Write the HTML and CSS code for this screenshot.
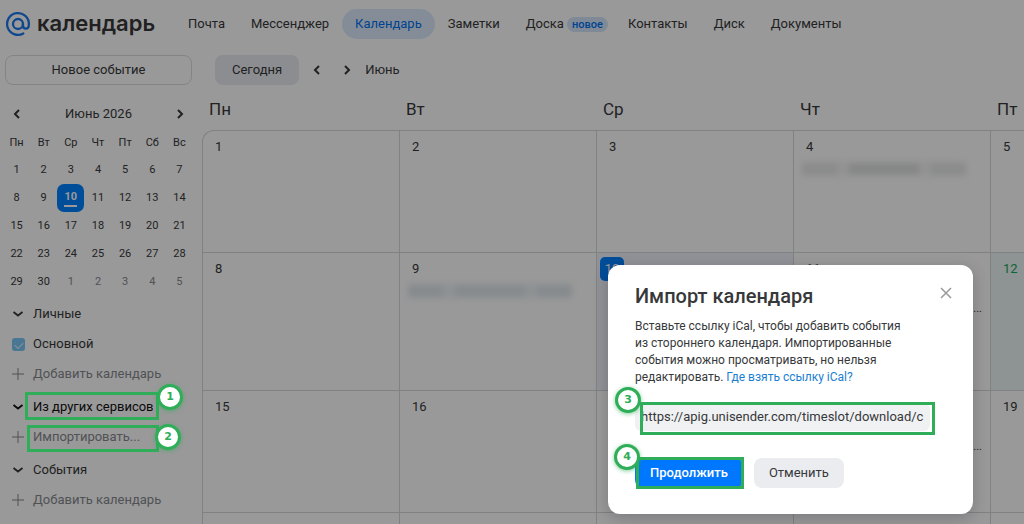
FILE: index.html
```html
<!DOCTYPE html>
<html lang="ru">
<head>
<meta charset="utf-8">
<title>Календарь</title>
<link rel="stylesheet" href="styles.css">
</head>
<body>
<div class="page">
  <header class="header">
    <a class="logo" href="#">
      <svg class="logo-mark" viewBox="0 0 26 26">
        <circle cx="13" cy="13" r="5"/>
        <path d="M18 13v1.600c0 1.900 1.200 3.100 2.800 3.100s3.100-1.500 3.100-4.700A10.900 10.900 0 1 0 18.300 22.500"/>
      </svg>
      <span>календарь</span>
    </a>
    <nav class="nav">
      <a href="#">Почта</a>
      <a href="#">Мессенджер</a>
      <a class="active" href="#">Календарь</a>
      <a href="#">Заметки</a>
      <a href="#">Доска <span class="tag">новое</span></a>
      <a href="#">Контакты</a>
      <a href="#">Диск</a>
      <a href="#">Документы</a>
    </nav>
  </header>

  <div class="body">
    <aside class="sidebar">
      <button class="new-event" type="button">Новое событие</button>
      <div class="mini-head">
        <button class="arrow" type="button" aria-label="Предыдущий месяц"><svg viewBox="0 0 12 12"><path d="M8 2 4 6l4 4"/></svg></button>
        <span>Июнь 2026</span>
        <button class="arrow" type="button" aria-label="Следующий месяц"><svg viewBox="0 0 12 12"><path d="m4 2 4 4-4 4"/></svg></button>
      </div>
      <table class="mini">
        <thead><tr><th>Пн</th><th>Вт</th><th>Ср</th><th>Чт</th><th>Пт</th><th>Сб</th><th>Вс</th></tr></thead>
        <tbody>
          <tr><td>1</td><td>2</td><td>3</td><td>4</td><td>5</td><td>6</td><td>7</td></tr>
          <tr><td>8</td><td>9</td><td><span class="mini-today">10</span></td><td>11</td><td>12</td><td>13</td><td>14</td></tr>
          <tr><td>15</td><td>16</td><td>17</td><td>18</td><td>19</td><td>20</td><td>21</td></tr>
          <tr><td>22</td><td>23</td><td>24</td><td>25</td><td>26</td><td>27</td><td>28</td></tr>
          <tr><td>29</td><td>30</td><td class="other">1</td><td class="other">2</td><td class="other">3</td><td class="other">4</td><td class="other">5</td></tr>
        </tbody>
      </table>
      <section class="group">
        <button class="row" type="button"><svg class="chev" viewBox="0 0 12 12"><path d="m1.500 4 4.500 3.500L10.500 4"/></svg>Личные</button>
        <label class="row"><input class="check" type="checkbox" checked>Основной</label>
        <button class="row muted" type="button"><svg class="plus" viewBox="0 0 12 12"><path d="M6 0v12M0 6h12"/></svg>Добавить календарь</button>
      </section>
      <section class="group">
        <button class="row strong" type="button"><svg class="chev" viewBox="0 0 12 12"><path d="m1.500 4 4.500 3.500L10.500 4"/></svg>Из других сервисов
          <span class="mark mark-1"><b>1</b></span></button>
        <button class="row muted" type="button"><svg class="plus" viewBox="0 0 12 12"><path d="M6 0v12M0 6h12"/></svg>Импортировать...
          <span class="mark mark-2"><b>2</b></span></button>
      </section>
      <section class="group">
        <button class="row" type="button"><svg class="chev" viewBox="0 0 12 12"><path d="m1.500 4 4.500 3.500L10.500 4"/></svg>События</button>
        <button class="row muted" type="button"><svg class="plus" viewBox="0 0 12 12"><path d="M6 0v12M0 6h12"/></svg>Добавить календарь</button>
      </section>
    </aside>

    <main class="main">
      <div class="toolbar">
        <button class="today-btn" type="button">Сегодня</button>
        <button class="arrow" type="button" aria-label="Назад"><svg viewBox="0 0 12 12"><path d="M8 2 4 6l4 4"/></svg></button>
        <button class="arrow" type="button" aria-label="Вперёд"><svg viewBox="0 0 12 12"><path d="m4 2 4 4-4 4"/></svg></button>
        <span>Июнь</span>
      </div>
      <div class="weekdays"><span>Пн</span><span>Вт</span><span>Ср</span><span>Чт</span><span>Пт</span></div>
      <div class="month">
        <div class="cell">1</div><div class="cell">2</div><div class="cell">3</div>
        <div class="cell">4<div class="hidden-event"><i></i><i></i><i></i></div></div>
        <div class="cell">5</div>
        <div class="cell">8</div>
        <div class="cell">9<div class="hidden-event blue"><i></i><i></i><i></i></div></div>
        <div class="cell current"><span class="current-day">10</span></div>
        <div class="cell">11<p class="more">...</p></div>
        <div class="cell holiday">12</div>
        <div class="cell">15</div><div class="cell">16</div><div class="cell">17</div>
        <div class="cell">18<p class="more">...</p></div>
        <div class="cell">19</div>
        <div class="cell"></div><div class="cell"></div><div class="cell"></div><div class="cell"></div><div class="cell"></div>
      </div>
    </main>
  </div>

  <div class="shade"></div>

  <form class="dialog" role="dialog" aria-labelledby="dialog-title">
    <div class="dialog-head">
      <h1 id="dialog-title">Импорт календаря</h1>
      <button class="close" type="button" aria-label="Закрыть"><svg viewBox="0 0 12 12"><path d="m1 1 10 10M11 1 1 11"/></svg></button>
    </div>
    <p class="dialog-text">Вставьте ссылку iCal, чтобы добавить события<br>из стороннего календаря. Импортированные<br>события можно просматривать, но нельзя<br>редактировать. <a href="#">Где взять ссылку iCal?</a></p>
    <div class="field">
      <input type="text" aria-label="Ссылка iCal" value="https://apig.unisender.com/timeslot/download/calendar">
      <span class="mark mark-3"><b>3</b></span>
    </div>
    <div class="actions">
      <button class="primary" type="button">Продолжить<span class="mark mark-4"><b>4</b></span></button>
      <button class="secondary" type="button">Отменить</button>
    </div>
  </form>
</div>
</body>
</html>
```
FILE: styles.css
```css
* { box-sizing: border-box; }
body {
  margin: 0;
  background: #fff;
  color: #37383a;
  font: 13px/16px Roboto, "Open Sans", sans-serif;
}
button, input { font: inherit; color: inherit; }
button { border: 0; padding: 0; background: none; }
a { color: inherit; text-decoration: none; }
svg { fill: none; stroke: currentColor; flex: none; }

.page {
  position: relative;
  height: 100vh;
  overflow: hidden;
}

.header {
  display: flex;
  align-items: center;
  height: 47px;
  padding-left: 5px;
}
.logo {
  display: flex;
  align-items: center;
  gap: 6px;
  width: 170px;
  font: 600 22px/28px Inter, sans-serif;
}
.logo-mark { width: 26px; height: 26px; stroke: #1a78ee; stroke-width: 2.3; stroke-linecap: round; }
.logo span { padding-bottom: 2px; }
.nav { display: flex; white-space: nowrap; }
.nav a { padding: 7px 13px; border-radius: 16px; }
.nav .active { background: #dcecfc; color: #0070f0; }
.tag {
  margin-right: -6px;
  padding: 1px 5px;
  border-radius: 8px;
  background: #d5e7fb;
  color: #0070f0;
  font-size: 11px;
  line-height: 14px;
  font-weight: 500;
}

.body { display: flex; padding-top: 8px; }
.sidebar { flex: none; width: 202px; padding: 0 10px 0 5px; }
.new-event {
  width: 100%;
  height: 30px;
  border: 1px solid #dcdde0;
  border-radius: 8px;
}
.mini-head {
  display: flex;
  align-items: center;
  justify-content: space-between;
  height: 20px;
  margin: 19px 6px 6px;
}
.arrow { display: flex; align-items: center; justify-content: center; }
.arrow svg { width: 12px; height: 12px; stroke-width: 2; }
.mini {
  width: 190px;
  margin-left: -2px;
  border-spacing: 0;
  table-layout: fixed;
  font-size: 11px;
  text-align: center;
}
.mini th { height: 26px; padding: 0; font-weight: 400; }
.mini td { height: 28px; padding: 0; }
.mini .other { color: #87898f; }
.mini-today {
  display: block;
  width: 27px;
  height: 28px;
  padding-top: 5px;
  border-radius: 7px;
  background: #0080ff;
  color: #fff;
  font-weight: 700;
}
.mini-today::after {
  content: "";
  display: block;
  width: 13px;
  height: 2px;
  margin: 0 auto;
  background: #fff;
}
.group { margin-bottom: 3px; }
.mini + .group { padding-top: 3px; }
.row {
  position: relative;
  display: flex;
  align-items: center;
  gap: 9px;
  width: 100%;
  height: 30px;
  padding-left: 7px;
  text-align: left;
  white-space: nowrap;
}
.row svg { width: 12px; height: 12px; }
.chev { stroke-width: 1.8; }
.muted { color: #87898f; }
.strong { color: #111; }
.check {
  appearance: none;
  display: grid;
  place-items: center;
  width: 13px;
  height: 13px;
  margin: 0 -1px 0 0;
  border-radius: 3px;
  background: #79c5f5;
}
.check::after {
  content: "";
  width: 7px;
  height: 4px;
  border: solid #e8f4fc;
  border-width: 0 0 1px 1px;
  rotate: -45deg;
}

.main { flex: 1; min-width: 0; overflow: hidden; }
.toolbar {
  display: flex;
  align-items: center;
  height: 30px;
  padding-left: 13px;
}
.today-btn {
  height: 30px;
  padding: 0 17px;
  border-radius: 8px;
  background: #e9ebf0;
}
.toolbar .arrow { width: 30px; height: 30px; }
.toolbar .today-btn + .arrow { margin-left: 3px; }
.toolbar span { padding-left: 3px; }
.weekdays, .month {
  display: grid;
  grid-template-columns: repeat(5, minmax(197px, 1fr));
}
.weekdays {
  padding: 14px 0 11px;
  font-size: 17px;
  line-height: 20px;
}
.weekdays span { padding-left: 7px; }
.month {
  grid-template-rows: 122px 138px 122px 122px;
  border-top: 1px solid #d6d7db;
  border-left: 1px solid #d6d7db;
  border-top-left-radius: 12px;
}
.cell {
  padding: 8px 12px;
  border-right: 1px solid #d6d7db;
  border-bottom: 1px solid #d6d7db;
}
.current { padding: 4px 3px; background: #f2f4fc; }
.current-day {
  display: block;
  width: 24px;
  height: 24px;
  border-radius: 5px;
  background: #0080ff;
  color: #fff;
  line-height: 24px;
  text-align: center;
}
.holiday { color: #16a85a; background: #edf5f6; }
.more { margin: 24px -4px 0; font-size: 11px; text-align: right; }
.hidden-event {
  display: flex;
  gap: 12px;
  height: 16px;
  margin: 6px 12px 0 -4px;
  background: #f5f5f5;
  filter: blur(3px);
}
.hidden-event i { flex: 1; margin: 3px 0; background: #e6e7e8; }
.hidden-event i:nth-child(2) { flex: 2; background: #dedfe0; }
.hidden-event.blue { background: #eff4f7; }
.hidden-event.blue i { background: #dfe6eb; }

.shade { position: absolute; inset: 0; z-index: 1; background: rgba(0, 0, 0, .4); }

.dialog {
  position: absolute;
  z-index: 2;
  right: 51px;
  bottom: 10px;
  width: 365px;
  padding: 18px 21px 26px 27px;
  border-radius: 12px;
  background: #fff;
  box-shadow: 0 4px 16px rgba(0, 0, 30, .2);
}
.dialog-head { display: flex; justify-content: space-between; align-items: flex-start; }
.dialog h1 { margin: 0; font-size: 20px; line-height: 26px; font-weight: 500; }
.close { display: flex; padding-top: 4px; color: #999; }
.close svg { width: 12px; height: 12px; stroke-width: 1.5; }
.dialog-text { margin: 9px 0 17px; font-size: 12px; line-height: 17px; white-space: nowrap; }
.dialog-text a { color: #1a7fd4; }
.field { position: relative; width: 295px; }
.field input {
  width: 100%;
  height: 28px;
  padding: 0 6px 2px;
  border: 0;
  border-radius: 6px;
  background: #f0f1f3;
}
.actions { display: flex; gap: 11px; margin-top: 27px; }
.actions button { height: 30px; padding: 0 15px; border-radius: 8px; }
.actions .primary { position: relative; background: #07f; color: #fff; font-weight: 500; }
.actions .secondary { background: #ebecf0; }

.mark { position: absolute; z-index: 3; border: 3px solid #2fad58; }
.mark b {
  position: absolute;
  width: 26px;
  height: 26px;
  border: 3px solid #2fad58;
  border-radius: 50%;
  background: #fff;
  color: #2fad58;
  box-shadow: 0 1px 4px rgba(47, 173, 88, .6);
  font: 700 11px/20px "DejaVu Sans", sans-serif;
  text-align: center;
}
.mark-1 { inset: 0 33px 2px 20px; }
.mark-1 b { top: -11px; right: -27px; }
.mark-2 { inset: 3px 33px 0 22px; }
.mark-2 b { top: -4px; right: -25px; }
.mark-3 { inset: -1px -5px -4px 5px; }
.mark-3 b { top: -18px; left: -28px; }
.mark-4 { inset: -1px -1px -1px 1px; }
.mark-4 b { top: -16px; left: -25px; }
```
